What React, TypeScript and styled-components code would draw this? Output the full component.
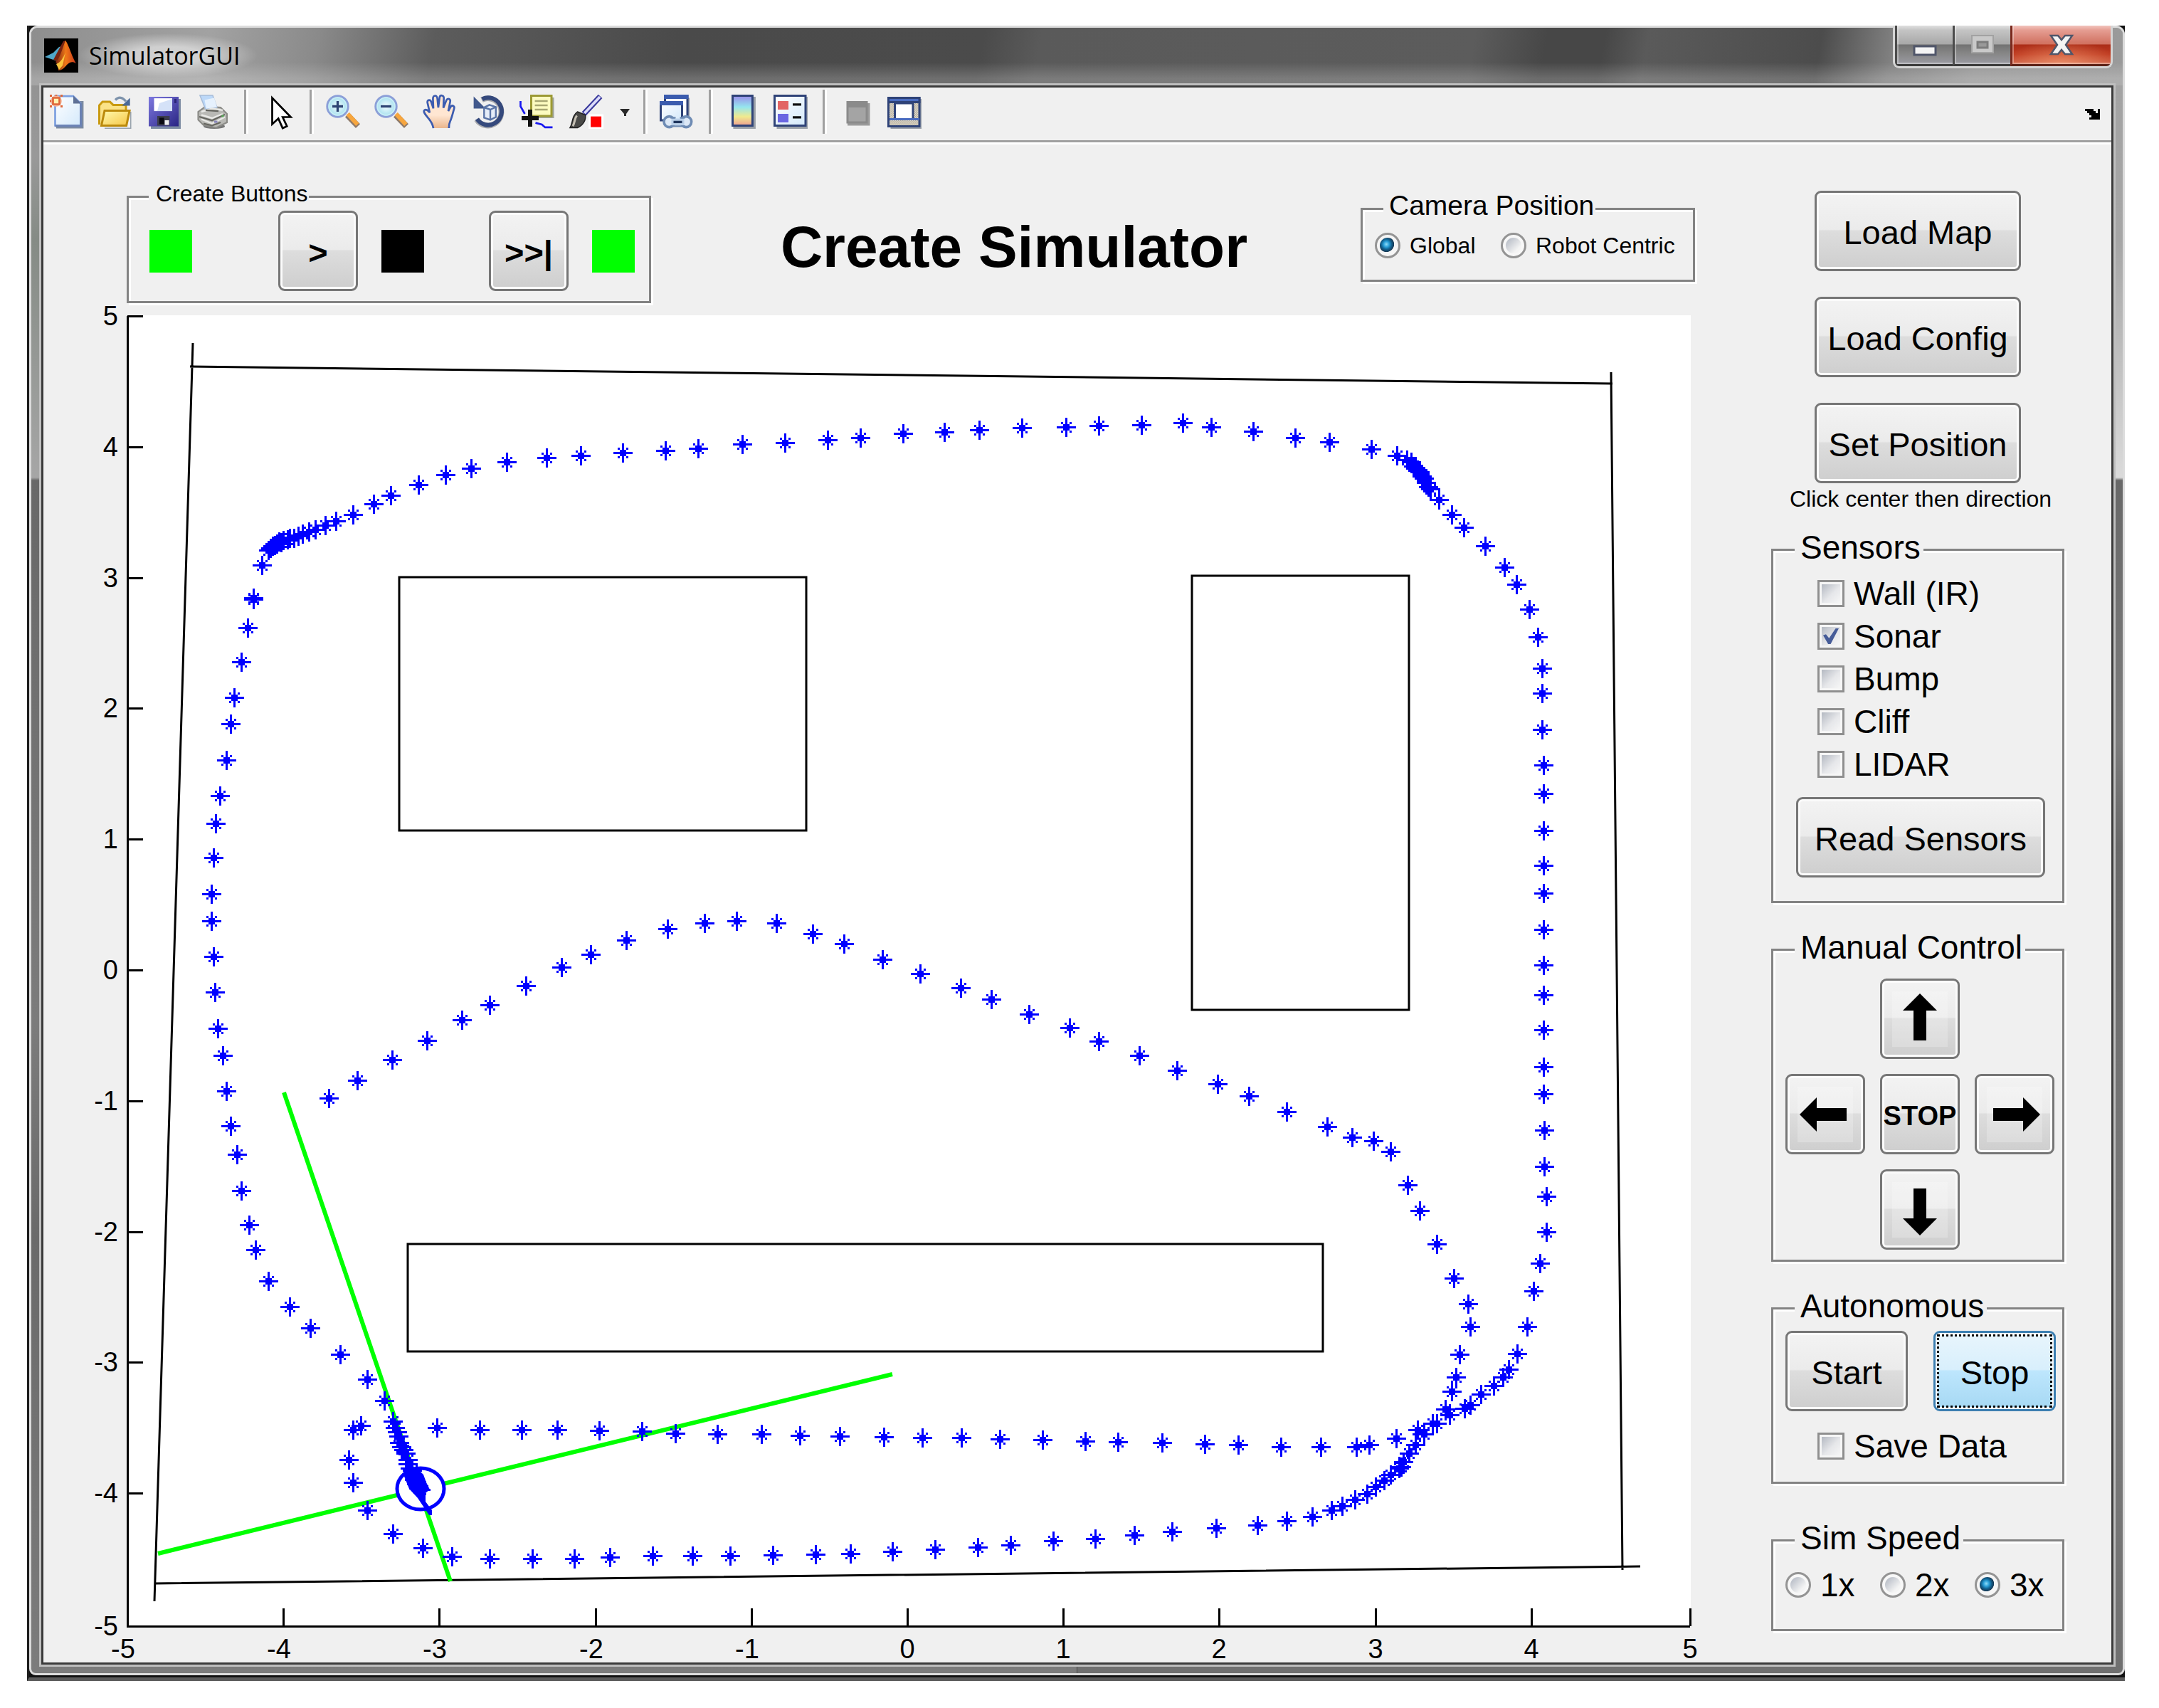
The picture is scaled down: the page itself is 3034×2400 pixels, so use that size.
import React, { useState } from "react";
import styled, { createGlobalStyle, css } from "styled-components";

const GlobalStyle = createGlobalStyle`
  * { box-sizing: border-box; }
  body {
    margin: 0;
    background: #fff;
    color: #000;
    font-family: "Liberation Sans", Arial, sans-serif;
    font-size: 32px;
  }
`;

/* ---------- window chrome ---------- */

const Desktop = styled.main`
  padding: 36px 48px 38px 38px;
`;

const Shadow = styled.div`
  border-left: 3px solid #1d1d1d;
  border-bottom: 5px solid #5c5c5c;
  background: #111;
  padding-bottom: 3px;
`;

const Glass = styled.div`
  border: 3px solid #dcdcdc;
  padding: 0 13px 12px 14px;
  border-radius: 12px 12px 9px 9px;
  background:
    linear-gradient(180deg, #a2a2a2 0, #a6a6a6 300px, #dadada 632px, #686868 636px, #7c7c7c 1000px, #686868 1150px, #7c7c7c 1800px, #707070 100%) right / 50% 100% no-repeat,
    linear-gradient(180deg, #8f8f8f 0, #999 180px, #858b85 300px, #a6a6a6 632px, #686868 636px, #7c7c7c 1400px, #6a6a6a 1700px, #7c7c7c 100%) left / 50% 100% no-repeat;
`;

const TitleBar = styled.header`
  display: flex;
  align-items: flex-start;
  height: 81px;
  margin: 0 -13px 0 -14px;
  padding-left: 18px;
  border-radius: 9px 9px 0 0;
  background:
    linear-gradient(180deg, rgba(255, 255, 255, 0) 60%, rgba(255, 255, 255, 0.2) 88%),
    linear-gradient(100deg, #8e8e8e 0, #a2a2a2 250px, #8a8a8a 400px, #5c5c5c 560px, #4a4a4a 900px, #4b4b4b 1320px, #5a5a5a 1400px, #5c5c5c 2000px, #474747 2100px, #474747 2180px, #5a5a5a 2240px, #4c4c4c 2480px, #808080 2580px, #979797 2700px, #9a9a9a 100%);
`;

const AppIcon = styled.svg`
  width: 48px;
  height: 48px;
  margin-top: 15px;
`;

const WindowTitle = styled.h1`
  margin: 8px 0 0;
  padding: 0 24px 0 15px;
  font: 400 34px/62px "Open Sans", "Noto Sans", sans-serif;
  background: radial-gradient(closest-side, rgba(225, 225, 225, 0.75) 40%, rgba(225, 225, 225, 0));
`;

const WindowButtons = styled.div`
  display: flex;
  margin-left: auto;
  margin-right: 14px;
  margin-top: -3px;
  border: 3px solid #d4d4d4;
  border-top: 0;
  border-radius: 0 0 9px 9px;
  overflow: hidden;
`;

const WindowButton = styled.button<{ $close?: boolean }>`
  width: ${(p) => (p.$close ? 141 : 81)}px;
  height: 57px;
  padding: 0;
  display: grid;
  place-items: center;
  border: 0;
  border-bottom: 3px solid #3c3c3c;
  border-left: 3px solid #4c4c4c;
  box-shadow: inset 2px -2px 0 rgba(255, 255, 255, 0.35);
  background: linear-gradient(180deg, #e0e0e0 0, #c4c4c4 12%, #a8a8a8 48%, #727272 50%, #868686 72%, #9a9aa2 100%);
  ${(p) =>
    p.$close &&
    css`
      border-left-color: #7a2a1e;
      border-bottom-color: #5e2318;
      background:
        radial-gradient(ellipse 60% 60% at 50% 100%, rgba(240, 150, 110, 0.8), rgba(240, 150, 110, 0)),
        linear-gradient(180deg, #f2c4bd 0, #e59d92 12%, #d0705f 48%, #ab2d18 50%, #bf3a20 75%, #cd6046 100%);
    `}
  svg { width: 36px; height: 36px; }
`;

const Client = styled.div`
  border: 3px solid #3b3b3b;
  box-shadow: 0 0 0 3px #bfbfbf;
  background: #f0f0f0;
  position: relative;
`;

/* ---------- toolbar ---------- */

const Toolbar = styled.nav`
  display: flex;
  align-items: center;
  gap: 20px;
  height: 80px;
  padding: 0 15px 10px 9px;
  border-bottom: 3px solid #fff;
  box-shadow: inset 0 -3px 0 #a0a0a0;
`;

const ToolButton = styled.button<{ $narrow?: boolean; $last?: boolean }>`
  flex: none;
  width: ${(p) => (p.$narrow ? 17 : 48)}px;
  height: 48px;
  padding: 0;
  border: 0;
  background: none;
  ${(p) => p.$last && "width: 22px; margin-left: auto;"}
  svg { display: block; width: 100%; height: 48px; overflow: visible; }
`;

const Divider = styled.span`
  width: 6px;
  height: 62px;
  margin: 0 -3px 0 1px;
  border-left: 3px solid #a0a0a0;
  border-right: 3px solid #fff;
`;

/* ---------- page body ---------- */

const Body = styled.div`
  display: grid;
  grid-template-columns: minmax(0, 1fr) 412px;
  column-gap: 100px;
  padding: 0 66px 0 60px;
`;

const Header = styled.div`
  display: flex;
  align-items: flex-start;
  justify-content: space-between;
  height: 225px;
  padding: 53px 7px 0 57px;
`;

const Heading = styled.h2`
  margin: 49px 0 0;
  padding-left: 23px;
  font-size: 82px;
  line-height: 83px;
  font-weight: 700;
  white-space: nowrap;
`;

const Group = styled.fieldset<{ $pad: string; $gap?: number; $width?: string }>`
  min-width: 0;
  width: ${(p) => p.$width ?? "auto"};
  margin: ${(p) => p.$gap ?? 0}px 0 0;
  padding: ${(p) => p.$pad};
  border: 3px solid #838383;
  box-shadow: inset 3px 3px 0 #fff, 3px 3px 0 #fff;
`;

const legendSizes = {
  small: "font-size: 32px; line-height: 32px; padding: 0 2px 8px 10px; margin-left: -1px;",
  medium: "font-size: 39px; line-height: 40px; padding: 0 2px 8px 8px; margin-left: 12px;",
  large: "font-size: 46px; line-height: 46px; padding: 0 4px 6px 8px; margin-left: 13px;",
};

const Legend = styled.legend<{ $size: keyof typeof legendSizes }>`
  background: #f0f0f0;
  white-space: nowrap;
  ${(p) => legendSizes[p.$size]}
`;

const PushButton = styled.button<{ $w?: number; $icon?: boolean; $bold?: boolean; $small?: boolean; $hot?: boolean }>`
  position: relative;
  flex: none;
  display: grid;
  place-items: center;
  width: ${(p) => p.$w ?? 112}px;
  height: 113px;
  padding: ${(p) => (p.$icon ? 0 : 4)}px 0 0;
  border: 3px solid #767676;
  border-radius: 9px;
  box-shadow: inset 0 0 0 3px #fbfbfb;
  background: linear-gradient(180deg, #f3f3f3 0, #ebebeb 48%, #dddddd 50%, #cecece 100%);
  color: #000;
  font-family: inherit;
  font-size: ${(p) => (p.$small ? 38 : 47)}px;
  font-weight: ${(p) => (p.$bold ? 700 : 400)};
  line-height: 56px;
  white-space: nowrap;
  ${(p) =>
    p.$hot &&
    css`
      border-color: #3c7fb1;
      background: linear-gradient(180deg, #e8f5fc 0, #d8effc 48%, #bde6fd 50%, #a6d8f3 100%);
      &::after {
        content: "";
        position: absolute;
        inset: 2px;
        border: 3px dotted #000;
      }
    `}
`;

const CreateRow = styled.div`
  display: grid;
  grid-template-columns: 181px 296px auto;
  align-items: center;
`;

const Pair = styled.div`
  display: flex;
  align-items: center;
  gap: 33px;
`;

const Led = styled.span<{ $on?: boolean }>`
  width: 60px;
  height: 60px;
  background: ${(p) => (p.$on ? "#00ff00" : "#000")};
`;

const Choice = styled.label<{ $small?: boolean }>`
  display: flex;
  align-items: center;
  gap: 13px;
  height: ${(p) => (p.$small ? 40 : 60)}px;
  font-size: ${(p) => (p.$small ? 32 : 46)}px;
  line-height: 1;
  white-space: nowrap;
`;

const Radio = styled.input`
  appearance: none;
  flex: none;
  width: 36px;
  height: 36px;
  margin: 0;
  border: 3px solid #949494;
  border-radius: 50%;
  background: linear-gradient(135deg, #bcc1ca 15%, #f4f4f4 75%) content-box, #f8f8f8;
  padding: 4px;
  &:checked {
    background:
      radial-gradient(circle at 42% 42%, #8fdcf8 0, #2a9fd8 22%, #12618f 40%, #173a56 58%, rgba(23, 58, 86, 0) 62%) content-box,
      #f6f6f6;
  }
`;

const Check = styled.input`
  appearance: none;
  flex: none;
  display: grid;
  place-items: center;
  width: 38px;
  height: 38px;
  margin: 0;
  padding: 3px;
  border: 3px solid #8f8f8f;
  background: linear-gradient(135deg, #b4b9c2 0, #e6e7ea 55%, #f6f6f6 100%) content-box, #f6f6f6;
  &:checked::after {
    content: "";
    width: 22px;
    height: 22px;
    background: #465c98;
    clip-path: polygon(0 44%, 18% 38%, 38% 62%, 80% 0, 100% 0, 48% 100%, 32% 100%);
  }
`;

/* ---------- sidebar ---------- */

const Sidebar = styled.aside`
  padding-top: 65px;
`;

const FileActions = styled.div`
  display: grid;
  justify-items: center;
  gap: 36px;
`;

const Hint = styled.p`
  margin: 4px 0 27px;
  padding-left: 8px;
  display: flex;
  justify-content: center;
  white-space: nowrap;
  font-size: 32px;
  line-height: 36px;
`;

const CheckList = styled.div`
  padding-left: 45px;
`;

const ReadRow = styled.div`
  padding: 16px 0 0 15px;
`;

const Pad = styled.div`
  display: grid;
  grid-template-columns: repeat(3, 112px);
  grid-template-areas: ". up ." "left stop right" ". down .";
  gap: 21px;
`;

const Area = styled.div<{ $area: string }>`
  grid-area: ${(p) => p.$area};
`;

const ButtonRow = styled.div`
  display: grid;
  grid-template-columns: 172px 172px;
  gap: 36px;
  margin-bottom: 19px;
`;

const SpeedRow = styled.div`
  display: grid;
  grid-template-columns: repeat(3, 133px);
`;

const CameraRow = styled.div`
  display: grid;
  grid-template-columns: 177px auto;
`;

/* ---------- plot ---------- */

const Plot = styled.svg`
  display: block;
  width: 100%;
  height: auto;
  overflow: visible;
  font-family: "Liberation Sans", Arial, sans-serif;
  font-size: 38px;
`;

type Point = [number, number];

const leg = (x0: number, y0: number, sx: number, sy: number, flat: number[]): Point[] => {
  const out: Point[] = [];
  for (let i = 0; i < flat.length; i += 2) {
    out.push([Math.round(x0 + flat[i] * sx), Math.round(y0 + flat[i + 1] * sy)]);
  }
  return out;
};

const K = 1.935;
const THIRD = 1 / 3;

const trail: Point[] = [
  // start of the run, across the middle of the room
  ...leg(0, -1, K, K, [
    239, 798, 259.5, 785, 285, 770, 310, 756, 335.5, 741, 355.5, 730, 382, 716.5, 407.5, 703, 429, 693.5,
    455, 683, 484.5, 675, 511.5, 671, 535, 669, 564, 671, 590, 678.5, 613, 686, 641, 697, 668, 707.5,
    697.5, 718, 720, 726, 747.5, 737, 777, 747, 798, 756.5, 827.5, 767, 855, 778, 884, 787.5, 907, 796.5,
  ]),
  // right-hand bend
  ...leg(1750, 1550, 0.4464, 0.5421, [
    131, 22, 257, 60, 337, 88, 403, 98, 457, 126, 510, 213, 549, 279, 602, 366, 656, 454, 702, 520, 709, 580,
    675, 651, 662, 711, 649, 748, 629, 793, 642, 808, 602, 831, 589, 830, 562, 857, 536, 885, 516, 907,
    497, 930, 490, 942, 484, 947, 457, 963, 437, 978, 410, 995, 384, 1012, 344, 1028, 304, 1044, 271, 1055,
    211, 1071, 131, 1083, 38, 1094,
  ]),
  // lower corridor, heading west
  ...leg(0, -1, K, K, [
    883, 1110, 851, 1112.5, 824, 1115, 795.5, 1118, 765, 1119.5, 734, 1122.5, 710, 1124, 679, 1125.5,
    648, 1127, 617.5, 1128.5, 592, 1129, 561, 1129.5, 530, 1130, 503, 1130, 474, 1130, 443, 1131.5,
  ]),
  // turn in the lower left corner
  ...leg(460, 1880, THIRD, THIRD, [
    1041, 930, 863, 930, 685, 930, 525, 921, 401, 886, 276, 824, 169, 726, 107, 610, 89, 512, 107, 388,
    142, 370, 463, 379, 641, 388, 818, 388, 969, 388,
  ]),
  // back east
  ...leg(0, -1, K, K, [
    435, 1039.5, 466, 1040, 490.5, 1041.5, 521, 1042, 553, 1042, 581, 1043, 610, 1043.5, 642, 1044,
    670, 1044.5, 698, 1044.5, 726, 1045.5, 757, 1046, 788, 1047, 812, 1047.5, 844, 1048, 875, 1049, 899, 1049.5,
  ]),
  ...leg(1750, 1550, 0.4464, 0.5421, [
    111, 891, 237, 891, 350, 891, 390, 886, 476, 869, 542, 847, 689, 791, 709, 783, 741, 755, 782, 733,
    810, 710, 828, 689, 855, 650, 888, 579, 908, 487, 928, 415, 948, 333, 948, 241, 941, 164, 941, 71,
  ]),
  // north along the right wall
  ...leg(0, -1, K, K, [
    1121, 795, 1121, 775, 1121, 748.5, 1121, 723, 1121, 701.5, 1121, 675.5, 1121, 649, 1121, 629, 1121, 603.5,
    1121, 577, 1121, 556, 1120, 530, 1120, 504, 1120, 486, 1117, 463,
  ]),
  // upper right corner
  ...leg(1900, 580, THIRD, THIRD, [
    748, 829, 694, 722, 641, 651, 561, 562, 472, 482, 419, 429, 366, 367, 330, 322, 321, 313, 312, 295,
    303, 277, 295, 268, 286, 250, 277, 241, 268, 232, 259, 224, 250, 206, 232, 197, 188, 180, 81, 153,
  ]),
  // along the top wall
  ...leg(0, -1, K, K, [
    965.5, 321.5, 940.5, 318.5, 910, 313.5, 879.5, 310.5, 859, 307.5, 829, 309, 798, 309.5, 774, 310.5,
    742, 311, 711, 312.5, 686, 314, 656, 315.5, 625, 318.5, 601, 320, 570, 322, 539, 323, 507, 326,
    483, 327.5, 452, 329,
  ]),
  // upper left corner
  ...leg(340, 560, THIRD, THIRD, [
    1427, 240, 1285, 249, 1116, 267, 965, 293, 858, 320, 743, 364, 627, 409, 556, 444, 467, 489, 397, 516,
    352, 533, 308, 551, 281, 560, 254, 569, 236, 578, 218, 587, 201, 588, 192, 594, 174, 596, 165, 605,
    157, 604, 148, 612, 139, 618, 130, 622, 121, 631, 112, 640, 85, 702, 49, 845,
  ]),
  // south along the left wall
  ...leg(0, -1, K, K, [
    184, 434.5, 180, 456.5, 175, 481, 170, 507, 167.5, 526, 164.5, 552.5, 159.5, 578.5, 156.5, 598.5,
    155, 623.5, 153.5, 649.5, 153.5, 669, 155, 695, 156, 721, 158, 747.5, 161.5, 767, 164.5, 793,
    167.5, 818, 172, 839, 175, 865, 181, 890, 185.5, 908, 195, 930.5, 210.5, 949.5, 225.5, 965,
  ]),
  // final approach to the robot
  ...leg(460, 1880, THIRD, THIRD, [
    54, 68, 169, 174, 240, 263, 276, 352, 285, 379, 294, 397, 300, 415, 303, 441, 312, 459, 321, 472,
    330, 486, 339, 513, 339, 530, 348, 548, 357, 557, 357, 575, 366, 584, 366, 597, 375, 606, 375, 615,
    384, 624, 384, 632, 392, 640,
  ]),
];

const STAR = "M-13-1h27v3h-27zM-1-13h3v27h-3zM-4-4h9v9h-9zM-7-7h3v3h-3zM5-7h3v3h-3zM-7 5h3v3h-3zM5 5h3v3h-3z";

const AXIS = { left: 179, right: 2375, top: 444, bottom: 2285 };
const ticks = [-5, -4, -3, -2, -1, 0, 1, 2, 3, 4, 5];
const tickX = (v: number) => (v === 5 ? AXIS.right : Math.round(AXIS.left + (v + 5) * 219.2));
const tickY = (v: number) => (v === -5 ? AXIS.bottom : Math.round(AXIS.top + (5 - v) * 183.8));

function MapPlot() {
  return (
    <Plot viewBox="121 428 2268 1908" role="img" aria-label="Robot path on the map">
      <rect x="178" y="443" width="2198" height="1843" fill="#fff" />
      <g stroke="#000" strokeWidth="3" fill="none" shapeRendering="crispEdges">
        <path d={`M${AXIS.left} ${AXIS.top}V${AXIS.bottom}H${AXIS.right}`} />
        {ticks.map((v) => (
          <path key={v} d={`M${tickX(v)} ${AXIS.bottom}v-25M${AXIS.left} ${tickY(v)}h22`} />
        ))}
      </g>
      {ticks.map((v) => (
        <g key={v}>
          <text x={v < 0 ? tickX(v) - 6 : tickX(v)} y="2330" textAnchor="middle">{v}</text>
          <text x="166" y={tickY(v) + 13} textAnchor="end">{v}</text>
        </g>
      ))}
      <g stroke="#000" strokeWidth="3" fill="none">
        <path d="M271 482L217 2250M267 515L2266 539M2264 523L2280 2206M217 2225L2305 2201" />
        <path d="M561 811H1133V1167H561zM1675 809H1980V1419H1675zM573 1748H1859V1899H573z" />
      </g>
      <path d="M399 1535L633 2222M222 2183L1254 1931" stroke="#0f0" strokeWidth="6" />
      <ellipse cx="591" cy="2092" rx="33" ry="29" fill="#fff" stroke="#00f" strokeWidth="5" />
      <path
        d="M573 2060L585 2062L595 2072L599 2083L604 2093L598 2098V2110L607 2122V2129H603L587 2105L575 2092L567 2072z"
        fill="#00f"
      />
      <g fill="#00f">
        {trail.map(([x, y], i) => (
          <path key={i} d={STAR} transform={`translate(${x} ${y})`} />
        ))}
      </g>
    </Plot>
  );
}

/* ---------- icons, all on a 16 unit grid ---------- */

const Svg = ({ children }: { children: React.ReactNode }) => (
  <svg viewBox="0 0 16 16" aria-hidden="true">{children}</svg>
);

const HiddenSvg = styled.svg`
  position: absolute;
`;

const IconDefs = () => (
  <HiddenSvg width="0" height="0" aria-hidden="true">
    <defs>
      <linearGradient id="paper" x1="0" y1="0" x2="1" y2="1"><stop offset="0" stopColor="#fff" /><stop offset="1" stopColor="#d4e9fb" /></linearGradient>
      <linearGradient id="gold" x1="0" y1="0" x2="1" y2="1"><stop offset="0" stopColor="#fffbb0" /><stop offset="1" stopColor="#f6c544" /></linearGradient>
      <linearGradient id="disk" x1="0" y1="0" x2="1" y2="1"><stop offset="0" stopColor="#7d78e0" /><stop offset="1" stopColor="#2a2584" /></linearGradient>
      <radialGradient id="lens"><stop offset="0" stopColor="#f2fdff" /><stop offset="1" stopColor="#9fdcec" /></radialGradient>
      <linearGradient id="skin" x1="0" y1="0" x2="0" y2="1"><stop offset="0.6" stopColor="#ffe6d2" /><stop offset="1" stopColor="#eab68c" /></linearGradient>
      <linearGradient id="spectrum" x1="0" y1="0" x2="0" y2="1"><stop offset="0" stopColor="#9a8cea" /><stop offset="0.38" stopColor="#95e6ee" /><stop offset="0.7" stopColor="#f0ea8e" /><stop offset="1" stopColor="#f0a090" /></linearGradient>
      <linearGradient id="flame" x1="0" y1="0" x2="1" y2="0"><stop offset="0" stopColor="#7a2410" /><stop offset="0.5" stopColor="#f07818" /><stop offset="1" stopColor="#c8381c" /></linearGradient>
      <pattern id="mesh" width="1" height="1" patternUnits="userSpaceOnUse"><rect width="1" height="1" fill="#e2ddd0" /><path d="M0 0h.5v.5h-.5zM.5 .5h.5v.5h-.5z" fill="#b4ac9a" /></pattern>
    </defs>
  </HiddenSvg>
);

const NewIcon = () => (
  <Svg>
    <path d="M3 3h12.800v12.800h-12.800z" fill="#7c8ba2" />
    <path d="M2.500 .7h8.500l3.500 3.500v10.300h-12z" fill="url(#paper)" stroke="#7d9fe0" strokeWidth=".9" />
    <path d="M11 .5v3.700h3.700z" fill="#5f7196" />
    <path d="M14.500 4v10.600h-12" fill="none" stroke="#6b82b4" />
    <circle cx="3" cy="3" r="2.600" fill="#f6b79a" />
    <path d="M1.500 1.500h3v3h-3z" fill="#fff2b0" stroke="#e0683a" strokeWidth=".9" />
    <path d="M0 0h1v1h-1zM5 0h1v1h-1zM0 5h1v1h-1zM5 5h1v1h-1zM0 2.500h.7v1h-.7zM2.500 0h1v.6h-1z" fill="#e0683a" />
  </Svg>
);
const OpenIcon = () => (
  <Svg>
    <path d="M3 15.500h12V8h.5v8H3z" fill="#98a2ac" />
    <path d="M.5 14V5l1.500-1.700h3.500l1.500 1.500h6v3" fill="#fbe388" stroke="#c99a10" />
    <path d="M1.500 14.500L3 7.500h11.700L13.200 14.500z" fill="url(#gold)" stroke="#bb8a0c" />
    <path d="M8 2.500Q10.500 0 13 3.200" fill="none" stroke="#7e93ac" strokeWidth="1.100" />
    <path d="M14.900 1.500v3.700h-3.800z" fill="#4a6a98" />
  </Svg>
);
const SaveIcon = () => (
  <Svg>
    <path d="M2 2h14v14h-14z" fill="#7c8ba2" />
    <path d="M1 1h14v13.800h-14z" fill="url(#disk)" />
    <path d="M3.500 1.700h8.500v6h-8.500z" fill="#fff" />
    <path d="M6 4l6-2v5.700H5z" fill="#d5e2f8" />
    <path d="M13 2h1v2h-1z" fill="#2b2678" />
    <path d="M5 10h5.800v4.500H5z" fill="#3b3c4c" />
    <path d="M6 10.800h2.200v3h-2.200z" fill="#0a0a10" />
    <path d="M8.500 12h2v2.200h-2z" fill="#f0f0f0" />
  </Svg>
);
const PrintIcon = () => (
  <Svg>
    <ellipse cx="9" cy="14.800" rx="5" ry="1.200" fill="#777" />
    <path d="M1.500 8L5 5.500 12 6l3 3v4l-5 2.500-6-1.200-2.500-2.500z" fill="#b9b9b5" stroke="#8a8a86" strokeWidth=".7" />
    <path d="M2.300 .3h6l2 5.700L5 7z" fill="#bcd8f8" stroke="#a7bcd8" strokeWidth=".5" />
    <path d="M4.500 2.500l4.500-1 1.300 4.300L5.300 6.500z" fill="#e6f1fd" />
    <path d="M3 8l5-1.500 5 .8M3 9.500l5 1.500 5-2M3 11.500l5 2 6-3" fill="none" stroke="#e9e9e6" strokeWidth=".8" />
    <path d="M2 10.300l6 1.800 6-2.800M4 13.500l4 1 4-1.500M5 7.300l6 .4" fill="none" stroke="#65655f" strokeWidth=".7" />
    <path d="M9 12.200h1.500v1h-1.500z" fill="#8987b8" /><path d="M12.500 9.500h1v1h-1z" fill="#58a858" />
  </Svg>
);
const PointerIcon = () => (
  <Svg>
    <path d="M5.500 1.500v12.300l2.900-2.600 2 4.500 2-.9-2-4.300h3.800z" fill="#fff" stroke="#000" strokeWidth=".9" strokeLinejoin="miter" />
  </Svg>
);
const ZoomIcon = ({ plus }: { plus?: boolean }) => (
  <Svg>
    <path d="M10 9.500l5 5.200" stroke="#8f7a6a" strokeWidth="2.800" />
    <path d="M10.200 9l4.600 5" stroke="#f7a63e" strokeWidth="2" />
    <circle cx="5.500" cy="5.500" r="4.900" fill="url(#lens)" stroke="#8c9fd8" strokeWidth="1" />
    <circle cx="5.500" cy="5.500" r="4.100" fill="none" stroke="#c8eef6" strokeWidth=".6" />
    <path d={plus ? "M3 5.500h5M5.500 3v5" : "M3 5.500h5"} stroke="#2e4474" strokeWidth="1.100" />
  </Svg>
);
const HandIcon = () => (
  <Svg>
    <path d="M5 15.700c-.3-2-1-3-2.200-4.500C1.500 9.700.2 8.300.7 7.400c.6-.9 1.800 0 2.600 1L2.200 3.600c0-1.300 1.400-1.400 1.800-.2l1 3L4.800 2c0-2 1.900-2 2.100 0l.4 4L7.900 1.400c.2-1.500 2-1.200 2 .2l-.2 4.600 1.400-3.600c.6-1.200 2-.6 1.800.6l-.9 4.500 1.100-2c.8-1.100 2-.2 1.600.9-.7 2.400-1 4-1.800 5.800-.6 1.200-.6 2-.6 3.300" fill="url(#skin)" stroke="#3c5cb0" strokeWidth=".9" />
  </Svg>
);
const RotateIcon = () => (
  <Svg>
    <path d="M5 2.400A6.300 6.400 0 1 1 2.600 11.600" fill="none" stroke="#a7a8ac" strokeWidth="2.600" />
    <path d="M5.200 2.100A6.300 6.400 0 1 1 2.800 11.400" fill="none" stroke="#35497c" strokeWidth="2" />
    <path d="M1.200 .8v5.700h5.600z" fill="#41588c" />
    <path d="M8.600 4.800l3 1v4.700l-2.600 1.300-2.900-1V6z" fill="#e6edf8" stroke="#5a74a6" strokeWidth=".8" />
    <path d="M6.100 6l2.900 1 2.600-1.200M9 7v4.600" fill="none" stroke="#5a74a6" strokeWidth=".8" />
  </Svg>
);
const DataTipIcon = () => (
  <Svg>
    <path d="M6.500 1.300h9.700v9.700h-9.700z" fill="#a3a79c" />
    <path d="M5.500 .5h9.500v9.500h-9.500z" fill="#fcfbc0" stroke="#9c9a34" />
    <path d="M7.200 3h6M7.200 5h6M7.200 7h6" stroke="#a9a873" strokeWidth=".8" />
    <path d="M.5 3v2.500l2 3.500M7.500 13.200l3 .8 1.500 1.300h3.500" fill="none" stroke="#1818f0" strokeWidth=".9" />
    <path d="M1 11h8M5 7v8" stroke="#111" strokeWidth="2" />
  </Svg>
);
const BrushIcon = () => (
  <Svg>
    <path d="M7.500 9L15.200 .8" stroke="#3a3a9c" strokeWidth="2.600" />
    <path d="M7.800 8.700L15 1" stroke="#dcdcfa" strokeWidth="1.200" />
    <path d="M4.500 8l3.700 1.500c.4 2.500-1.200 5-3.700 6H1C2.500 13 1.700 10 4.500 8z" fill="#4a4a48" stroke="#222" strokeWidth=".5" />
    <path d="M4.200 9.800c-1.200 1.500-.9 3.500-1.900 4.900" fill="none" stroke="#c5c0b4" />
    <path d="M9.700 9.200h7v6.800h-7z" fill="#fff" />
    <path d="M10.700 10.200h5v5h-5z" fill="#f00" />
  </Svg>
);
const CaretIcon = () => (
  <svg viewBox="0 0 17 48" aria-hidden="true"><path d="M5 20h14l-5 7v3h-3v-3z" fill="#2a2a2a" /></svg>
);
const LinkIcon = () => (
  <Svg>
    <path d="M3.500 1.500h10.500v10h-10.500z" fill="#9a9ea6" />
    <path d="M2.500 .5h10.500v10h-10.500z" fill="#fff" stroke="#2f4378" />
    <path d="M2 0h11.500v2h-11.500z" fill="#3b5cae" />
    <path d="M.5 3.500h10v8.500h-10z" fill="url(#paper)" stroke="#2f4378" />
    <path d="M0 3h11v2h-11z" fill="#3b5cae" />
    <circle cx="4.500" cy="12.700" r="2.500" fill="#dce8f6" stroke="#6f8cb4" strokeWidth="1.200" />
    <circle cx="12.400" cy="12.700" r="2.500" fill="#dce8f6" stroke="#6f8cb4" strokeWidth="1.200" />
    <path d="M5.500 12.800h6" stroke="#b9cfe8" strokeWidth="3.200" /><path d="M6.500 12.800h4" stroke="#20365e" strokeWidth="1.100" />
    <path d="M5 10.800h2.500M9.500 10.800h2.500M5 14.800h7" stroke="#6f8cb4" strokeWidth=".8" />
  </Svg>
);
const ColorbarIcon = () => (
  <Svg>
    <path d="M3.800 1h10.500v15h-10.500z" fill="#9aa0a8" />
    <path d="M3.500 .5h9.300v14h-9.300z" fill="url(#spectrum)" stroke="#2f4378" />
  </Svg>
);
const LegendIcon = () => (
  <Svg>
    <path d="M1.500 1h14.500v15h-14.500z" fill="#9aa0a8" />
    <path d="M.5 .5h14.500v14h-14.500z" fill="url(#paper)" stroke="#2f4378" />
    <path d="M2 3h5v4h-5z" fill="#e26464" /><path d="M2 9h5v4h-5z" fill="#6a66e2" />
    <path d="M9 4.600h4M9 10.600h4" stroke="#111" strokeWidth="1.100" />
  </Svg>
);
const HideIcon = () => (
  <Svg>
    <path d="M4 4h10.500v10.500h-10.500z" fill="#9b9b9b" /><path d="M3.500 3h10v10.500h-10z" fill="#8b8b8b" />
    <path d="M4.500 6h8v6.500h-8z" fill="#a4a4a4" />
  </Svg>
);
const DockIcon = () => (
  <Svg>
    <path d="M1.500 2h14.500v14h-14.500z" fill="#9aa0a8" />
    <path d="M.5 1.500h14.500v13.300h-14.500z" fill="url(#mesh)" stroke="#2f4378" />
    <path d="M0 1h15.500v3h-15.500z" fill="#2f4378" /><path d="M1 2h13.500v1h-13.500z" fill="#4a6cc0" />
    <path d="M3.500 4h8.500v7.500h-8.500z" fill="#fff" stroke="#2f4378" />
    <path d="M1 11.500h14" stroke="#4a6cc0" />
  </Svg>
);
const UndockIcon = () => (
  <svg viewBox="0 0 22 48" aria-hidden="true">
    <path d="M3 20h9v3h3v3h3v-6h3v15h-15v-3h3v-3h-3v-3h-3v-3h-3v-3z" fill="#000" />
  </svg>
);

const ArrowSvg = styled.svg<{ $turn: number }>`
  width: 78px;
  height: 78px;
  transform: rotate(${(p) => p.$turn}deg);
`;

const Arrow = ({ turn }: { turn: number }) => (
  <ArrowSvg $turn={turn} viewBox="0 0 78 78" aria-hidden="true">
    <rect width="78" height="78" fill="#fff" opacity="0.22" />
    <path d="M39 3l24 24h-15v42h-18v-42h-15z" fill="#000" />
  </ArrowSvg>
);

/* ---------- application ---------- */

const sensorNames = ["Wall (IR)", "Sonar", "Bump", "Cliff", "LIDAR"];

export default function App() {
  const [sensors, setSensors] = useState<string[]>(["Sonar"]);
  const [camera, setCamera] = useState("Global");
  const [speed, setSpeed] = useState("3x");
  const [saveData, setSaveData] = useState(false);

  const toggle = (name: string) =>
    setSensors((s) => (s.includes(name) ? s.filter((n) => n !== name) : [...s, name]));

  return (
    <Desktop>
      <GlobalStyle />
      <IconDefs />
      <Shadow>
        <Glass>
          <TitleBar>
            <AppIcon viewBox="0 0 48 48" aria-hidden="true">
              <rect width="48" height="48" fill="#000" />
              <path d="M1 26l12-6 8-8 4-1-7 21-5-2z" fill="#4fa6c8" />
              <path d="M13 30l9-17 5-9 4-1-9 32-4-3z" fill="#7a2410" />
              <path d="M30 3c4 4 9 23 15 32-5-3-9-2-13 2-4 5-8 8-12 8 0-4-1-9-4-12 6-4 10-20 14-30z" fill="url(#flame)" />
              <path d="M17 36c6-2 10-9 13-16l-4 18-5 6z" fill="#f9c33c" />
            </AppIcon>
            <WindowTitle>SimulatorGUI</WindowTitle>
            <WindowButtons>
              <WindowButton aria-label="Minimize">
                <svg viewBox="0 0 36 36" aria-hidden="true"><path d="M3 20h30v12h-30z" fill="#f4f4f4" stroke="#50566a" strokeWidth="3" /></svg>
              </WindowButton>
              <WindowButton aria-label="Maximize">
                <svg viewBox="0 0 36 36" aria-hidden="true">
                  <path d="M3 5h30v24h-30z" fill="#c9c9c9" stroke="#a2a2a2" strokeWidth="2" />
                  <path d="M11 14h14v8h-14z" fill="#999" stroke="#7c7c7c" strokeWidth="3" />
                </svg>
              </WindowButton>
              <WindowButton $close aria-label="Close">
                <svg viewBox="0 0 36 36" aria-hidden="true">
                  <path d="M3 5h10l5 6 5-6h10l-9 13 9 13h-10l-5-6-5 6h-10l9-13z" fill="#f4f4f4" stroke="#50566a" strokeWidth="2.500" />
                </svg>
              </WindowButton>
            </WindowButtons>
          </TitleBar>

          <Client>
            <Toolbar aria-label="Figure tools">
              <ToolButton aria-label="New"><NewIcon /></ToolButton>
              <ToolButton aria-label="Open"><OpenIcon /></ToolButton>
              <ToolButton aria-label="Save"><SaveIcon /></ToolButton>
              <ToolButton aria-label="Print"><PrintIcon /></ToolButton>
              <Divider />
              <ToolButton aria-label="Select"><PointerIcon /></ToolButton>
              <Divider />
              <ToolButton aria-label="Zoom in"><ZoomIcon plus /></ToolButton>
              <ToolButton aria-label="Zoom out"><ZoomIcon /></ToolButton>
              <ToolButton aria-label="Pan"><HandIcon /></ToolButton>
              <ToolButton aria-label="Rotate"><RotateIcon /></ToolButton>
              <ToolButton aria-label="Data cursor"><DataTipIcon /></ToolButton>
              <ToolButton aria-label="Brush"><BrushIcon /></ToolButton>
              <ToolButton $narrow aria-label="Brush colours"><CaretIcon /></ToolButton>
              <Divider />
              <ToolButton aria-label="Link plots"><LinkIcon /></ToolButton>
              <Divider />
              <ToolButton aria-label="Colorbar"><ColorbarIcon /></ToolButton>
              <ToolButton aria-label="Legend"><LegendIcon /></ToolButton>
              <Divider />
              <ToolButton aria-label="Hide plot tools"><HideIcon /></ToolButton>
              <ToolButton aria-label="Show plot tools"><DockIcon /></ToolButton>
              <ToolButton $last aria-label="Dock"><UndockIcon /></ToolButton>
            </Toolbar>

            <Body>
              <section>
                <Header>
                  <Group $pad="0 0 14px 29px" $width="737px">
                    <Legend $size="small">Create Buttons</Legend>
                    <CreateRow>
                      <Led $on />
                      <Pair><PushButton $bold>&gt;</PushButton><Led /></Pair>
                      <Pair><PushButton $bold>&gt;&gt;|</PushButton><Led $on /></Pair>
                    </CreateRow>
                  </Group>
                  <Heading>Create Simulator</Heading>
                  <Group $pad="8px 0 28px 17px" $width="470px" $gap={13}>
                    <Legend $size="medium">Camera Position</Legend>
                    <CameraRow>
                      {["Global", "Robot Centric"].map((name) => (
                        <Choice key={name} $small>
                          <Radio type="radio" name="camera" checked={camera === name} onChange={() => setCamera(name)} />
                          {name}
                        </Choice>
                      ))}
                    </CameraRow>
                  </Group>
                </Header>
                <MapPlot />
              </section>

              <Sidebar>
                <FileActions>
                  <PushButton $w={290}>Load Map</PushButton>
                  <PushButton $w={290}>Load Config</PushButton>
                  <PushButton $w={290}>Set Position</PushButton>
                </FileActions>
                <Hint>Click center then direction</Hint>

                <Group $pad="6px 0 33px 17px">
                  <Legend $size="large">Sensors</Legend>
                  <CheckList>
                    {sensorNames.map((name) => (
                      <Choice key={name}>
                        <Check type="checkbox" checked={sensors.includes(name)} onChange={() => toggle(name)} />
                        {name}
                      </Choice>
                    ))}
                  </CheckList>
                  <ReadRow>
                    <PushButton $w={350}>Read Sensors</PushButton>
                  </ReadRow>
                </Group>

                <Group $pad="15px 0 14px 17px" $gap={39}>
                  <Legend $size="large">Manual Control</Legend>
                  <Pad>
                    <Area $area="up"><PushButton $icon aria-label="Forward"><Arrow turn={0} /></PushButton></Area>
                    <Area $area="left"><PushButton $icon aria-label="Left"><Arrow turn={-90} /></PushButton></Area>
                    <Area $area="stop"><PushButton $bold $small>STOP</PushButton></Area>
                    <Area $area="right"><PushButton $icon aria-label="Right"><Arrow turn={90} /></PushButton></Area>
                    <Area $area="down"><PushButton $icon aria-label="Backward"><Arrow turn={180} /></PushButton></Area>
                  </Pad>
                </Group>

                <Group $pad="6px 0 20px 17px" $gap={39}>
                  <Legend $size="large">Autonomous</Legend>
                  <ButtonRow>
                    <PushButton $w={172}>Start</PushButton>
                    <PushButton $w={172} $hot>Stop</PushButton>
                  </ButtonRow>
                  <CheckList>
                    <Choice>
                      <Check type="checkbox" checked={saveData} onChange={() => setSaveData(!saveData)} />
                      Save Data
                    </Choice>
                  </CheckList>
                </Group>

                <Group $pad="7px 0 32px 17px" $gap={53}>
                  <Legend $size="large">Sim Speed</Legend>
                  <SpeedRow>
                    {["1x", "2x", "3x"].map((name) => (
                      <Choice key={name}>
                        <Radio type="radio" name="speed" checked={speed === name} onChange={() => setSpeed(name)} />
                        {name}
                      </Choice>
                    ))}
                  </SpeedRow>
                </Group>
              </Sidebar>
            </Body>
          </Client>
        </Glass>
      </Shadow>
    </Desktop>
  );
}
